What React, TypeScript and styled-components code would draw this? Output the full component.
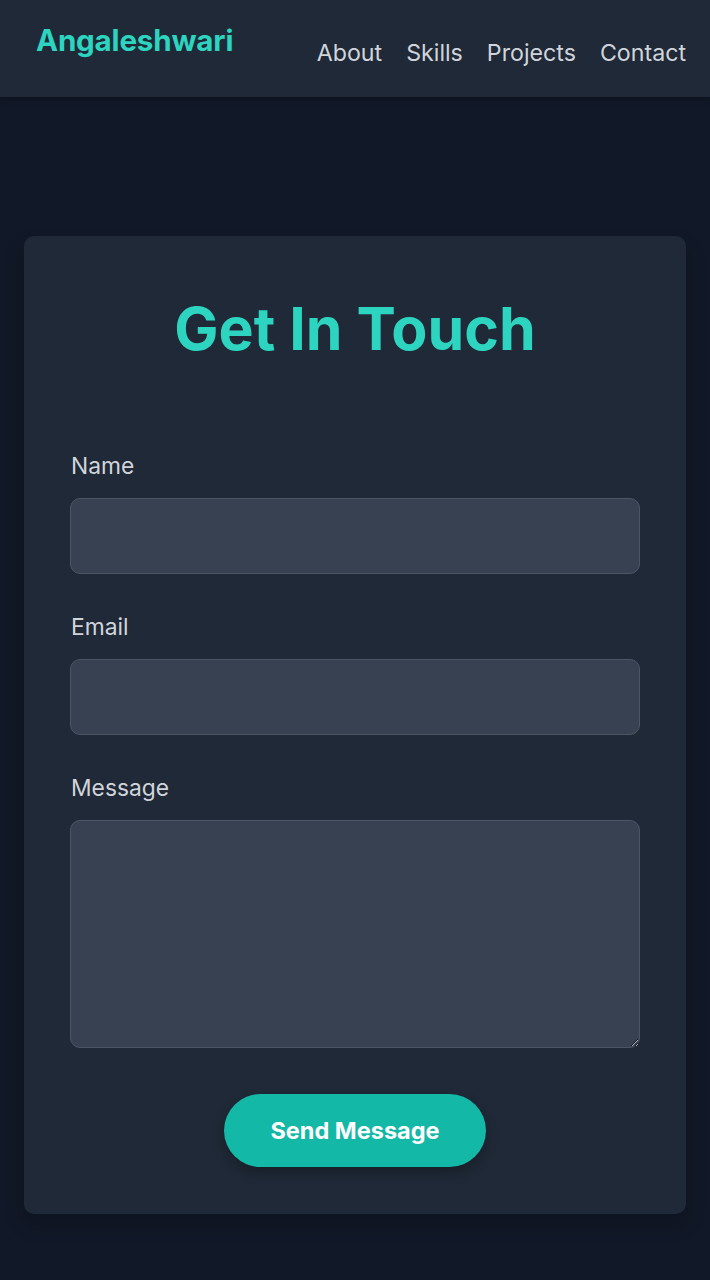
import React from "react";
import styled, { createGlobalStyle } from "styled-components";

const Global = createGlobalStyle`
  html, body { margin: 0; padding: 0; background: #111827; }
  body { font-family: Inter, "Noto Sans", sans-serif; -webkit-font-smoothing: antialiased; }
  * { box-sizing: border-box; }
`;

const Header = styled.header`
  height: 97px;
  background: #1f2937;
  display: flex;
  justify-content: space-between;
  align-items: flex-start;
  padding: 0 24px 0 36px;
  box-shadow: 0 2px 6px rgba(0, 0, 0, 0.25);
`;

const Logo = styled.div`
  color: #2dd4bf;
  font-size: 29.6px;
  font-weight: 700;
  line-height: 34px;
  padding-top: 23px;
  letter-spacing: -0.2px;
`;

const Nav = styled.nav`
  display: flex;
  gap: 24px;
  padding-top: 38px;
`;

const NavLink = styled.a`
  color: #d1d5db;
  font-size: 23.2px;
  line-height: 30px;
  text-decoration: none;
`;

const Main = styled.main`
  padding: 139px 24px 66px;
`;

const Card = styled.section`
  background: #1f2937;
  border-radius: 10px;
  padding: 57px 46px 47px;
  box-shadow: 0 10px 20px rgba(0, 0, 0, 0.2);
`;

const Title = styled.h2`
  margin: 0 0 88px;
  text-align: center;
  color: #2dd4bf;
  font-size: 59px;
  line-height: 72px;
  font-weight: 700;
`;

const Form = styled.form`
  display: flex;
  flex-direction: column;
`;

const Field = styled.div`
  display: flex;
  flex-direction: column;
  margin-bottom: 40px;
`;

const Label = styled.label`
  color: #d1d5db;
  font-size: 22.8px;
  line-height: 26px;
  margin-bottom: 19px;
  padding-left: 1px;
`;

const Input = styled.input`
  height: 76px;
  width: 100%;
  background: #374151;
  border: 1px solid #4b5563;
  border-radius: 10px;
  color: #fff;
  font-size: 20px;
  padding: 0 16px;
  outline: none;
`;

const TextArea = styled.textarea`
  height: 228px;
  width: 100%;
  background: #374151;
  border: 1px solid #4b5563;
  border-radius: 10px;
  color: #fff;
  font-size: 20px;
  padding: 16px;
  outline: none;
  display: block;
  font-family: inherit;
`;

const ButtonRow = styled.div`
  display: flex;
  justify-content: center;
  margin-top: 6px;
`;

const Button = styled.button`
  width: 262px;
  height: 73px;
  border: none;
  border-radius: 999px;
  background: #14b8a6;
  color: #fff;
  font-family: inherit;
  font-size: 23.5px;
  font-weight: 700;
  box-shadow: 0 6px 12px rgba(0, 0, 0, 0.25);
  cursor: pointer;
`;

export default function App() {
  return (
    <>
      <Global />
      <Header>
        <Logo>Angaleshwari</Logo>
        <Nav>
          <NavLink href="#about">About</NavLink>
          <NavLink href="#skills">Skills</NavLink>
          <NavLink href="#projects">Projects</NavLink>
          <NavLink href="#contact">Contact</NavLink>
        </Nav>
      </Header>
      <Main>
        <Card>
          <Title>Get In Touch</Title>
          <Form onSubmit={(e) => e.preventDefault()}>
            <Field>
              <Label htmlFor="name">Name</Label>
              <Input id="name" type="text" />
            </Field>
            <Field>
              <Label htmlFor="email">Email</Label>
              <Input id="email" type="email" />
            </Field>
            <Field>
              <Label htmlFor="message">Message</Label>
              <TextArea id="message" />
            </Field>
            <ButtonRow>
              <Button type="submit">Send Message</Button>
            </ButtonRow>
          </Form>
        </Card>
      </Main>
    </>
  );
}
